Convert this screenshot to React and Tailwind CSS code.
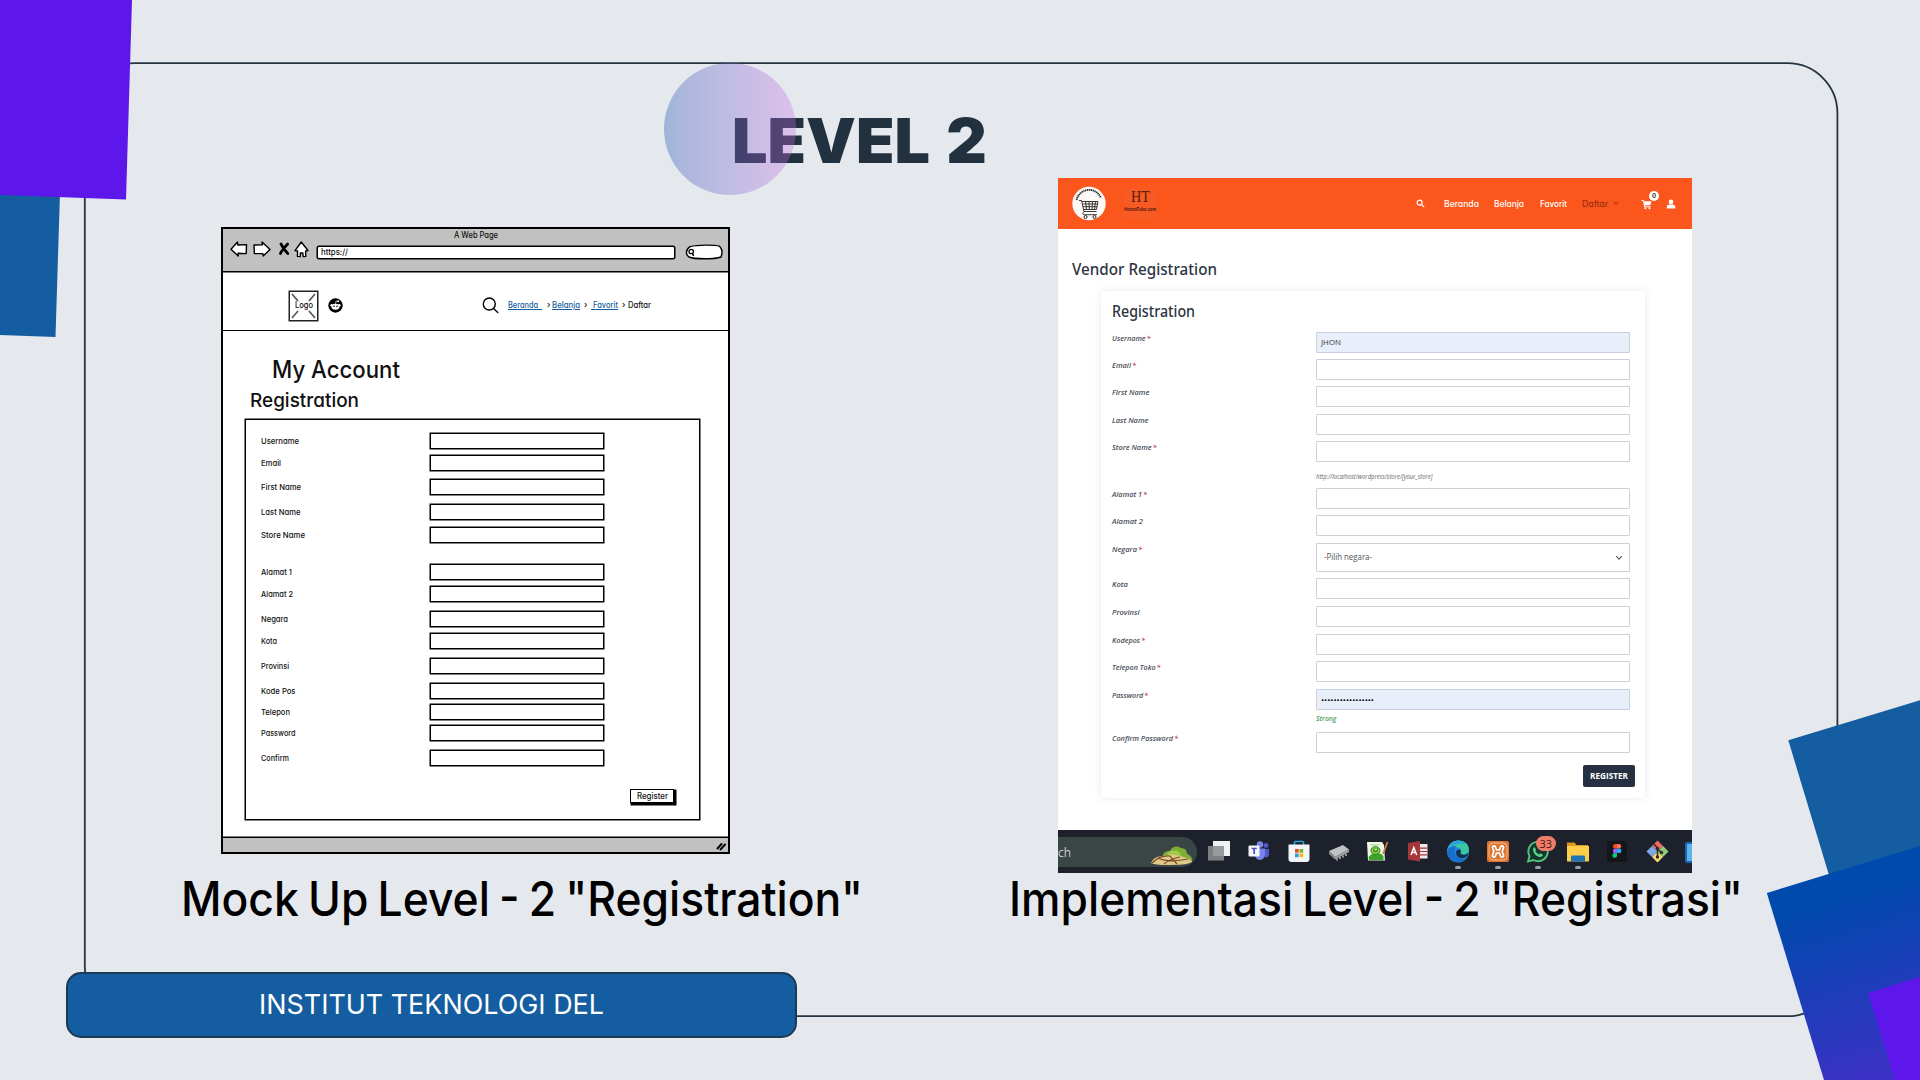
import { useLayoutEffect, useRef, useState } from "react";

/* Single-line text stretched horizontally to an exact width. */
function Fit({ w, className = "", children }) {
  const ref = useRef(null);
  const [scale, setScale] = useState(1);
  useLayoutEffect(() => {
    const el = ref.current;
    el.style.transform = "none";
    const natural = el.getBoundingClientRect().width;
    const next = natural ? w / natural : 1;
    el.style.transform = `scaleX(${next})`;
    setScale(next);
  }, [w, children]);
  return (
    <span className={`block shrink-0 ${className}`} style={{ width: w }}>
      <span ref={ref} className="inline-block origin-left whitespace-pre" style={{ transform: `scaleX(${scale})` }}>
        {children}
      </span>
    </span>
  );
}

function Backdrop() {
  return (
    <svg className="absolute inset-0" width="1920" height="1080" viewBox="0 0 1920 1080">
      <defs>
        <linearGradient id="tile" gradientUnits="userSpaceOnUse" x1="1830" y1="874" x2="1918" y2="1161">
          <stop offset="0" stopColor="#004aad" />
          <stop offset=".08" stopColor="#004aad" />
          <stop offset="1" stopColor="#5824d2" />
        </linearGradient>
      </defs>
      <rect x="84.8" y="63.2" width="1752.6" height="953" rx="50" fill="none" stroke="#263442" strokeWidth="1.8" />
      <path d="M0 180H60.4L55.5 337L0 335Z" fill="#145da0" />
      <path d="M0 0H132L126 199.6L0 195Z" fill="#5e17eb" />
      <path d="M1788.3 740.3L1920 700.3V900L1835 895Z" fill="#145da0" />
      <path d="M1766.8 893L1920 846V1080H1824Z" fill="url(#tile)" />
      <path d="M1868 993L1920 977V1080H1895Z" fill="#5e17eb" />
    </svg>
  );
}

const sketchRows = [
  ["Username", 38, "mt-[13px]"],
  ["Email", 20, "mt-[6px]"],
  ["First Name", 40, "mt-[8px]"],
  ["Last Name", 39.5, "mt-[9px]"],
  ["Store Name", 44, "mt-[7px]"],
  ["Alamat 1", 31, "mt-[21px]"],
  ["Alamat 2", 32, "mt-[6px]"],
  ["Negara", 27, "mt-[9px]"],
  ["Kota", 16, "mt-[6px]"],
  ["Provinsi", 28, "mt-[9px]"],
  ["Kode Pos", 34.5, "mt-[9px]"],
  ["Telepon", 29, "mt-[5px]"],
  ["Password", 34.5, "mt-[5px]"],
  ["Confirm", 28, "mt-[9px]"],
];

function SketchToolbar() {
  return (
    <div className="h-[43px] border-b border-black bg-[#c1c1c1] shadow-[0_0.5px_0_black]">
      <div className="flex h-[11px] justify-center text-[8.500px] leading-[12px]">
        <Fit w={44}>A Web Page</Fit>
      </div>
      <div className="mt-px flex h-4 items-center pl-[7px]">
        <svg width="18" height="16" viewBox="0 0 18 16" fill="#fff" stroke="#000" strokeWidth="1.4" strokeLinejoin="round">
          <path d="M1 8.2L7.5 1L7.8 4L16.5 3.6L16.2 12.6L8 12.2L8.2 15L1 8.2Z" />
        </svg>
        <svg className="ml-[5px]" width="18" height="16" viewBox="0 0 18 16" fill="#fff" stroke="#000" strokeWidth="1.4" strokeLinejoin="round">
          <path d="M1 4L9.4 3.8L9 1L17 8.4L10.2 15L9.8 12.6L1.4 12.6Z" />
        </svg>
        <svg className="ml-[7px]" width="12" height="14" viewBox="0 0 12 14" fill="none" stroke="#000" strokeWidth="2.8" strokeLinecap="round">
          <path d="M3 2C5 6 7 9 9.8 11.5M9.6 2C7 5 4 8 2.4 11.5" />
        </svg>
        <svg className="ml-1" width="15" height="17" viewBox="0 0 15 17" fill="#fff" stroke="#000" strokeWidth="1.4" strokeLinejoin="round">
          <path d="M7.3 1L14 9.5L11.6 10L11.8 15.4L9.2 15.6L8.8 12H6.4L6.2 15.6L3.4 15.4L3.6 10L1 9.6Z" />
        </svg>
        <div className="ml-[8px] mt-[6px] flex h-[13px] w-[358px] items-center rounded-[2px] border border-black bg-white pl-[3px] text-[8.500px] leading-none shadow-[0_0_0_0.5px_black]">
          <Fit w={27}>https://</Fit>
        </div>
        <svg className="ml-[10px] mt-[5px]" width="38" height="16" viewBox="0 0 38 16">
          <path d="M5 2.6C12 .6 30 .7 34.5 2.2C37.5 5 37.5 9 36 13C30 15.4 9 15.4 4 13C.3 10.5 .6 5.500 5 2.600Z" fill="#fff" stroke="#000" strokeWidth="1.4" />
          <circle cx="6.200" cy="7.500" r="2.200" fill="none" stroke="#000" strokeWidth="1.300" />
          <path d="M7.500 9.300L8.600 12" stroke="#000" strokeWidth="1.500" />
        </svg>
      </div>
    </div>
  );
}

function SketchNav() {
  return (
    <div className="flex h-[59px] items-center border-b border-black pt-[9px] text-[8.500px] leading-[11px]">
      <div className="relative ml-[66px] flex h-[30px] w-[29px] items-center justify-center border border-[#222] bg-white shadow-[0_0_0_0.5px_#222]">
        <svg className="absolute inset-0" width="27" height="28" viewBox="0 0 27 28" stroke="#555" fill="none">
          <path d="M2 2L8 9M25 2L19 9M2 26L8 19M25 26L19 19" strokeWidth="1.700" />
          <path d="M8 9L19 19M19 9L8 19" stroke="#ddd" strokeWidth="1" />
        </svg>
        <Fit w={18} className="relative">Logo</Fit>
      </div>
      <svg className="ml-[10px]" width="15" height="15" viewBox="0 0 15 15">
        <circle cx="7.500" cy="7.500" r="7.200" fill="#000" />
        <ellipse cx="7.500" cy="8.800" rx="4" ry="3" fill="#fff" />
        <circle cx="3.600" cy="7.200" r="1.200" fill="#fff" />
        <circle cx="11.400" cy="7.200" r="1.200" fill="#fff" />
        <circle cx="10.200" cy="3.300" r="1" fill="#fff" />
        <path d="M7.500 6L8 3.200L10 3.500" stroke="#fff" strokeWidth=".6" fill="none" />
        <circle cx="6" cy="8.300" r=".8" fill="#000" />
        <circle cx="9" cy="8.300" r=".8" fill="#000" />
      </svg>
      <svg className="ml-[139px]" width="17" height="17" viewBox="0 0 17 17" fill="none" stroke="#000" strokeWidth="1.400" strokeLinecap="round">
        <circle cx="7.300" cy="7" r="6" />
        <path d="M11.600 11.500L15.800 15.500" />
      </svg>
      <Fit w={34} className="ml-[9px] text-[#145da0] [&>span]:underline">{"Beranda  "}</Fit>
      <span className="ml-[5px] w-[5px]">›</span>
      <Fit w={28} className="text-[#145da0] [&>span]:underline">Belanja</Fit>
      <span className="ml-[4px] w-[7px]">›</span>
      <Fit w={27} className="text-[#145da0] [&>span]:underline">{" Favorit"}</Fit>
      <span className="ml-[4px] w-[6px]">›</span>
      <Fit w={23}>Daftar</Fit>
    </div>
  );
}

function SketchWindow() {
  return (
    <div className="flex h-[627px] w-[509px] flex-col border-2 border-black bg-white font-['Inter',sans-serif] font-medium text-[#111] [font-feature-settings:'cv11','ss03']">
      <SketchToolbar />
      <SketchNav />
      <Fit w={128} className="ml-[49px] mt-[25px] h-7 text-[24px] leading-7">My Account</Fit>
      <Fit w={109} className="ml-[27px] mt-[5px] h-6 text-[19px] leading-6">Registration</Fit>
      <div className="ml-[22px] mt-[6px] h-[401px] w-[455px] border border-black shadow-[0_0_0_0.5px_black]">
        {sketchRows.map(([label, w, gap]) => (
          <div key={label} className={`flex h-4 items-center pl-[15px] ${gap}`}>
            <div className="w-[169px] text-[8px] leading-[14px]">
              <Fit w={w}>{label}</Fit>
            </div>
            <div className="h-4 w-[174px] border border-black shadow-[0_0_0_0.5px_black]" />
          </div>
        ))}
        <div className="ml-[384px] mt-[23px] flex h-[14px] w-[44px] items-center justify-center border border-black bg-white text-[8.500px] leading-none shadow-[1.5px_1.5px_0_1px_black]">
          <Fit w={31}>Register</Fit>
        </div>
      </div>
      <div className="mt-auto flex h-[15px] items-center justify-end border-t border-black bg-[#c1c1c1] pr-[2px] shadow-[0_-0.5px_0_black]">
        <svg className="mt-[3px]" width="10" height="9" viewBox="0 0 10 9" stroke="#000" strokeWidth="1.900" strokeLinecap="round">
          <path d="M1.500 6.500L5.500 2M4.500 7.500L9 2.500" />
        </svg>
      </div>
    </div>
  );
}

const vendorRows = [
  { label: "Username", req: true, w: 38.5, gap: "mt-[7px]", value: "JHON" },
  { label: "Email", req: true, w: 24, gap: "mt-[6px]" },
  { label: "First Name", w: 37.5, gap: "mt-[6px]" },
  { label: "Last Name", w: 36.5, gap: "mt-[7px]" },
  { label: "Store Name", req: true, w: 44.500, gap: "mt-[6px]", note: "url" },
  { label: "Alamat 1", req: true, w: 35, gap: "mt-px" },
  { label: "Alamat 2", w: 31, gap: "mt-[6px]" },
  { label: "Negara", req: true, w: 30, gap: "mt-[7px]", select: true },
  { label: "Kota", w: 16, gap: "mt-[6px]" },
  { label: "Provinsi", w: 27.5, gap: "mt-[7px]" },
  { label: "Kodepos", req: true, w: 33, gap: "mt-[7px]" },
  { label: "Telepon Toko", req: true, w: 48.5, gap: "mt-[6px]" },
  { label: "Password", req: true, w: 36, gap: "mt-[7px]", dots: true, note: "strong" },
  { label: "Confirm Password", req: true, w: 66, gap: "mt-0" },
];

function VendorField({ row }) {
  if (row.select) {
    return (
      <div className="flex h-[29px] w-[314px] items-center justify-between rounded-[1px] border border-[#cfd1d6] bg-white pl-[7px] pr-[6px] text-[8.500px] leading-none text-[#555]">
        <Fit w={48}>-Pilih negara-</Fit>
        <svg width="8" height="6" viewBox="0 0 8 6" fill="none" stroke="#555" strokeWidth="1.100">
          <path d="M1.200 1.200L4 4.200L6.800 1.200" />
        </svg>
      </div>
    );
  }
  if (row.value || row.dots) {
    return (
      <div className="flex h-[21px] w-[314px] items-center rounded-[1px] border border-[#c5cfde] bg-[#e8effb] pl-[4px] text-[7.500px] leading-none text-[#333]">
        {row.value && <Fit w={20} className="mt-px">{row.value}</Fit>}
        {row.dots && <Fit w={53} className="text-[8px] text-black">•••••••••••••••••</Fit>}
      </div>
    );
  }
  return <div className="h-[21px] w-[314px] rounded-[1px] border border-[#cfd1d6] bg-white" />;
}

function VendorHeader() {
  return (
    <div className="flex h-[51px] items-center bg-[#fb561b] text-[8.500px] font-medium leading-[12px] text-white">
      <svg className="ml-[14px]" width="34" height="35" viewBox="0 0 34 35" fill="none" stroke="#2b2320">
        <circle cx="17" cy="17.500" r="16.700" fill="#fdfaf8" stroke="none" />
        <path d="M4.500 14A13 13.500 0 0 1 29 12" strokeWidth="1.800" strokeDasharray="1.300 .6" />
        <path d="M7 14.500H9.500L12 25.500H24.500M10 15.500H26L24.500 23.500H11.500M10.500 18H25.600M11 20.700H25.100M13.500 15.500L14.500 23.500M17 15.500L17.300 23.500M20.500 15.500L20 23.500M23.500 15.500L22.500 23.500M12 25.500Q9.500 28.500 12.500 28.700H25" strokeWidth=".9" />
        <circle cx="13.500" cy="31" r="1.500" strokeWidth="1" />
        <circle cx="22.500" cy="31" r="1.500" strokeWidth="1" />
      </svg>
      <div className="ml-[17px] flex h-[32px] w-[34px] flex-col items-center bg-[#f75a22] pt-[2px] text-[#5a1a10]">
        <Fit w={19} className="font-['Liberation_Serif',serif] text-[16px] leading-[14px]">HT</Fit>
        <Fit w={32} className="mt-[2px] text-[5px] font-bold leading-[6px]">HavanToko.com</Fit>
      </div>
      <svg className="ml-[259px]" width="9" height="9" viewBox="0 0 9 9" fill="none" stroke="#fff" strokeWidth="1.200">
        <circle cx="3.600" cy="3.600" r="2.500" />
        <path d="M5.500 5.500L8.200 8.200" />
      </svg>
      <Fit w={35} className="ml-[19px]">Beranda</Fit>
      <Fit w={30} className="ml-[15px]">Belanja</Fit>
      <Fit w={27} className="ml-[16px]">Favorit</Fit>
      <Fit w={26} className="ml-[15px] font-normal text-[#8a2c10]">Daftar</Fit>
      <svg className="ml-[5px]" width="6" height="5" viewBox="0 0 6 5" fill="none" stroke="#7a2810" strokeWidth="1">
        <path d="M1 1.200L3 3.200L5 1.200" />
      </svg>
      <div className="relative ml-[22px] mt-px">
        <svg width="12" height="11" viewBox="0 0 12 11" fill="#fff">
          <path d="M.5 1H2.600L3 2.300H10.500L9.300 6.300H4L4.200 7.200H9.500V8.200H3.300L2 2H.5Z" />
          <circle cx="4.300" cy="9.300" r="1" />
          <circle cx="8.500" cy="9.300" r="1" />
        </svg>
        <span className="absolute -top-[8px] left-[8px] flex h-[10px] w-[10px] items-center justify-center rounded-full bg-white text-[6px] font-bold leading-none text-[#333]">0</span>
      </div>
      <svg className="ml-[13px]" width="10" height="10" viewBox="0 0 10 10" fill="#fff">
        <circle cx="5" cy="2.900" r="2.300" />
        <path d="M.7 9.500V8Q.7 5.800 3.300 5.600H6.700Q9.300 5.800 9.300 8V9.500Z" />
      </svg>
    </div>
  );
}

const taskIcons = [
  {
    name: "tasks",
    art: (
      <>
        <rect x="6" y="1" width="17" height="15" fill="#f0f1f2" />
        <rect x="1" y="6" width="16" height="14.500" fill="#8b8d90" opacity=".88" />
      </>
    ),
  },
  {
    name: "teams",
    art: (
      <>
        <circle cx="13" cy="4.500" r="3.300" fill="#7b83eb" />
        <circle cx="19" cy="5.500" r="2.400" fill="#5059c9" />
        <path d="M14 9H22V14.500Q21.500 18 18 17.500Z" fill="#5059c9" />
        <path d="M8 8.500H18V15Q17 20 12.500 20Q9 19.500 8 15.500Z" fill="#7b83eb" />
        <rect x="1.500" y="5.500" width="11" height="11" rx="1" fill="#f5f5fb" />
        <path d="M4.500 8.500H9.800M7.150 8.500V14" stroke="#4b53bc" strokeWidth="1.700" />
      </>
    ),
  },
  {
    name: "store",
    art: (
      <>
        <path d="M7.500 5V2.500Q7.500 1.500 8.500 1.500H15.500Q16.500 1.500 16.500 2.500V5" fill="none" stroke="#2ba0dd" strokeWidth="1.600" />
        <path d="M1.500 4.500H22.500V19Q22.500 22 19.500 22H4.500Q1.500 22 1.500 19Z" fill="#f4f5f6" />
        <path d="M8 9H11.700V12.700H8Z" fill="#e8502c" />
        <path d="M12.500 9H16.200V12.700H12.500Z" fill="#7ab929" />
        <path d="M8 13.500H11.700V17.200H8Z" fill="#2a9fe0" />
        <path d="M12.500 13.500H16.200V17.200H12.500Z" fill="#f8b617" />
      </>
    ),
  },
  {
    name: "chip",
    art: (
      <>
        <path d="M2 11L16 5L22 9.500L8 17Z" fill="#bfc0c1" />
        <path d="M2 11L8 17V19.500L2 14Z" fill="#8a8b8d" />
        <path d="M8 17L22 9.500V12L8 19.500Z" fill="#9fa0a2" />
        <path d="M10 18.500V20.500M13 17V19M16 15.500V17.500M19 14V16" stroke="#d8d8d8" strokeWidth="1.300" />
      </>
    ),
  },
  {
    name: "editor",
    art: (
      <>
        <path d="M1 2H16L18 5L19 20.500H2Z" fill="#eef6e6" />
        <path d="M2.500 17Q6 12 10 14Q14 12 17.500 16V20H3Z" fill="#3aa52a" />
        <ellipse cx="9.500" cy="10.500" rx="4.500" ry="3.800" fill="#8ed04c" stroke="#2c7d1f" strokeWidth="1" />
        <path d="M7 10.500Q9.500 13 12 10.500M7.500 9H8.500M11 9H12" fill="none" stroke="#1c5a14" strokeWidth="1" />
        <path d="M4.500 5H13.500" stroke="#9cc98c" />
        <path d="M21.500 2L17 14" stroke="#c98538" strokeWidth="1.800" />
      </>
    ),
  },
  {
    name: "access",
    art: (
      <>
        <path d="M13 4H21.500V18.500H13Z" fill="#f3e9ea" />
        <path d="M13 8.200H21.500M13 11.500H21.500M13 14.800H21.500" stroke="#a4373a" strokeWidth="1.200" />
        <path d="M2 3L14 1V21.500L2 19.500Z" fill="#a4373a" />
        <path d="M5 15L7.800 7.500L10.700 15M6 12.600H9.700" fill="none" stroke="#fff" strokeWidth="1.500" />
      </>
    ),
  },
  {
    name: "edge",
    running: true,
    art: (
      <>
        <circle cx="12" cy="11.500" r="11" fill="#1b87d8" />
        <path d="M1 11Q3 .5 12.500 .5Q23 1 23 10Q22 15.500 16 14.500Q13.500 13.500 15 11.500Q15 7.500 10.500 7.500Q4 7.500 1 11Z" fill="#3cc7a4" />
        <path d="M1 11Q3 1 12 .5Q17 .5 20 4Q14 3 10.500 4.500Q4 6 1 11Z" fill="#2aa5d8" />
        <path d="M1 11Q4 5.500 10.500 6Q8 8 8.500 12Q9.500 20 20.500 18.500Q17 22.500 12 22.500Q2 21.500 1 11Z" fill="#1a6fc9" />
        <path d="M15 11.500Q13.500 13.500 16 14.500Q20 15.500 22 12.500Q22 17 17.500 18Q10 18.500 10 12Q11 9 14 9.500Z" fill="#14304f" />
      </>
    ),
  },
  {
    name: "xampp",
    running: true,
    art: (
      <>
        <rect x="1" y="1" width="22" height="21" rx="2" fill="#dd7430" />
        <rect x="3" y="3" width="18" height="17" rx="4" fill="none" stroke="#f3b887" strokeWidth="1" />
        <path d="M8 7.500L9.500 11.500L8 15.500M16 7.500L14.500 11.500L16 15.500M9.500 11.500H14.500" fill="none" stroke="#fff" strokeWidth="4.800" strokeLinecap="round" strokeLinejoin="round" />
        <path d="M8 7.500L9.500 11.500L8 15.500M16 7.500L14.500 11.500L16 15.500M9.500 11.500H14.500" fill="none" stroke="#dd7430" strokeWidth="1.400" strokeLinecap="round" strokeLinejoin="round" />
      </>
    ),
  },
  {
    name: "whatsapp",
    running: true,
    badge: "33",
    art: (
      <>
        <path d="M2 21.500L3.500 16A9.700 9.700 0 1 1 7.500 20Z" fill="#12372e" stroke="#52c47a" strokeWidth="1.900" />
        <path d="M8.500 7L10 9.500L9.300 11.200Q10.800 13.800 13.300 14.500L14.800 13.300L17 15Q16 17.500 13 17Q7.500 15 7 10Q7 7.500 8.500 7Z" fill="#5fd488" />
      </>
    ),
  },
  {
    name: "explorer",
    running: true,
    art: (
      <>
        <path d="M1 2.500H8.500L10.500 5H22V12H1Z" fill="#d99a1c" />
        <path d="M1 6H23V21.500H1Z" fill="#fbcf4a" />
        <path d="M5 21.500V16.500Q5 15.500 6 15.500H18Q19 15.500 19 16.500V21.500Z" fill="#2173b8" />
      </>
    ),
  },
  {
    name: "figma",
    art: (
      <>
        <rect x="2" y="1" width="20" height="21" rx="2" fill="#14161a" />
        <path d="M12 4H10.200A2.300 2.300 0 0 0 10.200 8.600H12Z" fill="#f24e1e" />
        <path d="M12 4H13.800A2.300 2.300 0 0 1 13.800 8.600H12Z" fill="#ff7262" />
        <path d="M12 8.600H10.200A2.300 2.300 0 0 0 10.200 13.200H12Z" fill="#a259ff" />
        <circle cx="14" cy="10.900" r="2.300" fill="#1abcfe" />
        <path d="M12 13.200H10.200A2.300 2.300 0 1 0 12 15.500Z" fill="#0acf83" />
      </>
    ),
  },
  {
    name: "git",
    art: (
      <>
        <path d="M12.500 .5L18 6L12.500 11.500L7 6Z" fill="#ee6a62" />
        <path d="M7 6L12.500 11.500L7 17L1.500 11.500Z" fill="#7da7e8" />
        <path d="M18 6L23.500 11.500L18 17L12.500 11.500Z" fill="#8fcc7a" />
        <path d="M12.500 11.500L18 17L12.500 22.500L7 17Z" fill="#f5d873" />
        <path d="M9 4L12.500 8V17M12.500 9L16.500 12.500" fill="none" stroke="#2b2b2b" strokeWidth="1.500" />
        <circle cx="12.500" cy="8.500" r="1.700" fill="#2b2b2b" />
        <circle cx="12.500" cy="17" r="1.700" fill="#2b2b2b" />
        <circle cx="16.500" cy="12.500" r="1.700" fill="#2b2b2b" />
      </>
    ),
  },
];

function Taskbar() {
  return (
    <div className="flex h-[43px] items-start overflow-hidden bg-[#1d212c] pt-[7px]">
      <div className="flex h-[30px] w-[139px] shrink-0 items-center justify-between rounded-r-full bg-[#3a4546] pr-[4px] font-['Open_Sans',sans-serif] text-[13px] leading-none text-[#c9cdcd]">
        <Fit w={13}>ch</Fit>
        <svg className="mt-[6px]" width="43" height="21" viewBox="0 0 43 21">
          <path d="M12 12Q14 5 20 6Q24 -1 31 3Q37 3 37 9Q43 11 42 17L30 15Z" fill="#7fae35" />
          <path d="M17 10Q20 4 24 6Q30 5 31 11L24 13Z" fill="#a3c94a" />
          <path d="M1 18Q3 12 12 11Q22 8 30 11Q40 13 42 17Q38 20 22 20Q6 20.500 1 18Z" fill="#dfc98a" />
          <path d="M2 18Q10 10 20 11L27 19M8 13Q18 18 38 14M14 19Q20 14 30 12" fill="none" stroke="#7d4b25" strokeWidth="1.200" />
        </svg>
      </div>
      <div className="ml-[10px] flex shrink-0">
        {taskIcons.map((icon) => (
          <div key={icon.name} className="relative mr-[15.850px] flex w-6 shrink-0 flex-col items-center pt-[3px]">
            <svg width="24" height="23" viewBox="0 0 24 23">{icon.art}</svg>
            {icon.running && <span className="mt-[3px] h-[3px] w-[6px] rounded-full bg-[#9a9da3]" />}
            {icon.badge && (
              <span className="absolute -top-px left-[10px] flex h-[15px] w-[20px] items-center justify-center rounded-full bg-[#ee7d69] font-['Open_Sans',sans-serif] text-[11px] leading-none text-[#4b1410]">
                {icon.badge}
              </span>
            )}
          </div>
        ))}
        <svg className="mt-[5px] shrink-0" width="22" height="21" viewBox="0 0 22 21">
          <rect x="0" y="0" width="22" height="21" rx="2" fill="#1b66b4" />
          <path d="M2 2H8V19H2Z" fill="#5db1ec" />
        </svg>
      </div>
    </div>
  );
}

function VendorPage() {
  return (
    <div className="flex h-[695px] w-[634px] flex-col bg-white font-['Open_Sans',sans-serif]">
      <div className="font-['Inter',sans-serif] [font-feature-settings:'cv11']">
        <VendorHeader />
      </div>
      <Fit w={145} className="ml-[14px] mt-[28px] h-6 font-['Noto_Sans',sans-serif] text-[16.500px] font-medium leading-6 text-[#2c3442]">Vendor Registration</Fit>
      <div className="ml-[43px] mt-[10px] h-[507px] w-[544px] bg-white pl-[11px] shadow-[0_0_8px_rgba(0,0,0,0.09)]">
        <Fit w={83} className="pt-[8px] font-['Noto_Sans',sans-serif] text-[16px] font-medium leading-[24px] text-[#2c3442]">Registration</Fit>
        <div className="pt-[2px]">
          {vendorRows.map((row) => (
            <div key={row.label} className={`flex ${row.gap}`}>
              <div className="w-[204px] pt-px text-[7.800px] font-semibold italic leading-[10px] text-[#4a505b]">
                <Fit w={row.w}>
                  {row.label}
                  {row.req && <span className="pl-px text-[#c0455a]">*</span>}
                </Fit>
              </div>
              <div>
                <VendorField row={row} />
                {row.note === "url" && (
                  <div className="h-[25px] pt-[10px] text-[6.500px] italic leading-[10px] text-[#666]">
                    <Fit w={116.5}>http://localhost/wordpress/store/[your_store]</Fit>
                  </div>
                )}
                {row.note === "strong" && (
                  <div className="h-[22px] pt-[4px] text-[6.500px] font-semibold italic leading-[10px] text-[#4fa266]">
                    <Fit w={20.5}>Strong</Fit>
                  </div>
                )}
              </div>
            </div>
          ))}
        </div>
        <div className="ml-[471px] mt-[12px] flex h-[22px] w-[52px] items-center justify-center rounded-[2px] bg-[#253142] text-[8.500px] font-bold leading-none text-white">
          <Fit w={38}>REGISTER</Fit>
        </div>
      </div>
      <div className="mt-auto">
        <Taskbar />
      </div>
    </div>
  );
}

export default function App() {
  return (
    <div className="relative h-[1080px] w-[1920px] overflow-hidden bg-[#e5e9ee] font-['Inter',sans-serif]">
      <Backdrop />
      <div className="relative flex h-full flex-col">
        <header className="h-[178px] pl-[732px] pt-[109px]">
          <h1 className="text-[62px] font-black leading-[63px] text-[#22313f] [word-spacing:0.06em]">
            <Fit w={255}>LEVEL 2</Fit>
          </h1>
        </header>
        <main className="flex h-[794px] items-start">
          <section className="ml-[181px] w-[684px] pt-[49px]">
            <div className="ml-[40px]">
              <SketchWindow />
            </div>
            <h2 className="mt-[19px] text-[47.500px] font-[450] leading-[52px] text-black [word-spacing:-0.06em]">
              <Fit w={682}>Mock Up Level - 2 "Registration"</Fit>
            </h2>
          </section>
          <section className="ml-[141px] w-[740px]">
            <div className="ml-[52px]">
              <VendorPage />
            </div>
            <h2 className="pl-[3px] text-[47.500px] font-[450] leading-[52px] text-black [word-spacing:-0.06em]">
              <Fit w={734}>Implementasi Level - 2 "Registrasi"</Fit>
            </h2>
          </section>
        </main>
        <footer className="ml-[66px] flex h-[66px] w-[731px] items-center rounded-[15px] border-2 border-[#1b3a56] bg-[#145da0] pl-[191px] text-[26.500px] leading-8 text-white">
          <Fit w={345} className="-mt-[2px]">INSTITUT TEKNOLOGI DEL</Fit>
        </footer>
      </div>
      <div className="absolute left-[664px] top-[62.500px] h-[132px] w-[132px] rounded-full bg-linear-to-r from-[#004aad] to-[#cb6ce6] opacity-[0.33]" />
    </div>
  );
}
